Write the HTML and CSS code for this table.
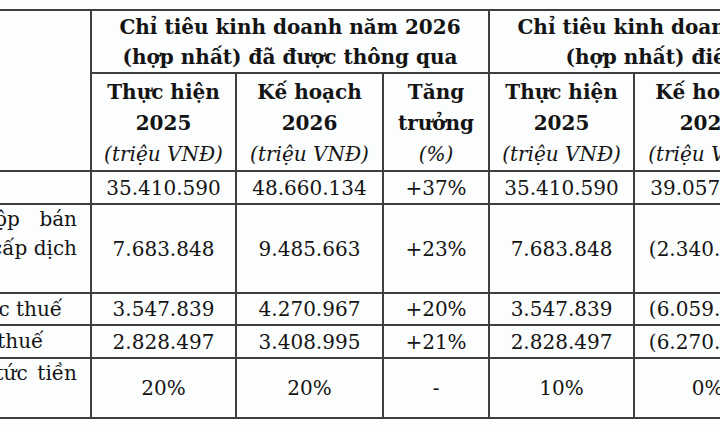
FILE: index.html
```html
<!DOCTYPE html>
<html lang="vi">
<head>
<meta charset="utf-8">
<link rel="stylesheet" href="styles.css">
</head>
<body>
<table class="kpi">
  <colgroup>
    <col class="c-label">
    <col class="c-num"><col class="c-num2"><col class="c-pct">
    <col class="c-num"><col class="c-num2"><col class="c-pct">
  </colgroup>
  <thead>
    <tr class="h1">
      <th rowspan="2" class="label-head">Chỉ tiêu</th>
      <th colspan="3">Chỉ tiêu kinh doanh năm 2026<br>(hợp nhất) đã được thông qua</th>
      <th colspan="3">Chỉ tiêu kinh doanh năm 2026<br>(hợp nhất) điều chỉnh</th>
    </tr>
    <tr class="h2">
      <th>Thực hiện<br>2025<br><em>(triệu VNĐ)</em></th>
      <th>Kế hoạch<br>2026<br><em>(triệu VNĐ)</em></th>
      <th>Tăng<br>trưởng<br><em>(%)</em></th>
      <th>Thực hiện<br>2025<br><em>(triệu VNĐ)</em></th>
      <th>Kế hoạch<br>2026<br><em>(triệu VNĐ)</em></th>
      <th>Tăng<br>trưởng<br><em>(%)</em></th>
    </tr>
  </thead>
  <tbody>
    <tr class="r1">
      <td class="label">Doanh thu</td>
      <td>35.410.590</td><td>48.660.134</td><td>+37%</td>
      <td>35.410.590</td><td>39.057.362</td><td>+10%</td>
    </tr>
    <tr class="r2">
      <td class="label"><span class="jl">Lợi nhuận gộp bán</span><span class="jl">hàng và cung cấp dịch</span><span class="ll">vụ</span></td>
      <td>7.683.848</td><td>9.485.663</td><td>+23%</td>
      <td>7.683.848</td><td>(2.340.118)</td><td>-</td>
    </tr>
    <tr class="r3">
      <td class="label">Lợi nhuận trước thuế</td>
      <td>3.547.839</td><td>4.270.967</td><td>+20%</td>
      <td>3.547.839</td><td>(6.059.245)</td><td>-</td>
    </tr>
    <tr class="r4">
      <td class="label">Lợi nhuận sau thuế</td>
      <td>2.828.497</td><td>3.408.995</td><td>+21%</td>
      <td>2.828.497</td><td>(6.270.481)</td><td>-</td>
    </tr>
    <tr class="r5">
      <td class="label"><span class="jl">Tỷ lệ chia cổ tức tiền</span><span class="ll">mặt</span></td>
      <td>20%</td><td>20%</td><td>-</td>
      <td>10%</td><td>0%</td><td>-</td>
    </tr>
  </tbody>
</table>
</body>
</html>
```

FILE: styles.css
```css
html, body {
  margin: 0;
  padding: 0;
  overflow: hidden;
  background: #fcfdfd;
}
body {
  width: 720px;
  height: 432px;
  padding-top: 9px;
  box-sizing: border-box;
}
.kpi {
  border-collapse: collapse;
  table-layout: fixed;
  width: 1051px;
  margin-left: -165px;
  font-family: "DejaVu Serif", "Liberation Serif", serif;
  font-size: 20px;
  color: #141414;
}
.c-label { width: 255px; }
.c-num { width: 145px; }
.c-num2 { width: 147px; }
.c-pct { width: 106px; }
.kpi th, .kpi td {
  border: 2px solid #3e3e3e;
  text-align: center;
  vertical-align: middle;
  padding: 0;
  white-space: nowrap;
}
.kpi th {
  font-weight: bold;
  line-height: 30px;
}
.kpi th em {
  font-weight: normal;
  font-style: italic;
}
.h1 th { height: 61px; }
.h2 th { height: 93px; line-height: 31px; padding-top: 3px; }
.label-head { color: transparent; }
.r1 td { height: 31px; }
.r2 td { height: 87px; }
.r3 td { height: 30px; }
.r4 td { height: 31px; }
.r5 td { height: 58px; }
.kpi td.label {
  text-align: left;
  line-height: 29px;
  padding: 0 13px 0 11px;
}
.jl {
  display: block;
  text-align: justify;
  text-align-last: justify;
}
.ll {
  display: block;
  text-align: left;
}
```
